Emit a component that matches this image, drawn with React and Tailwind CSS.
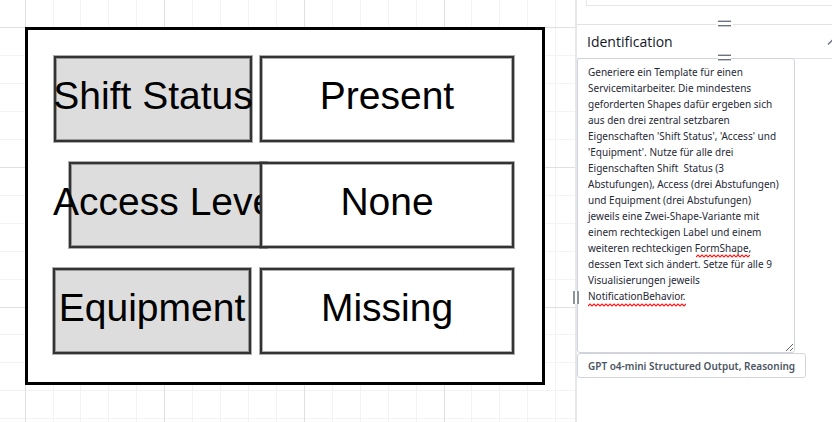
import React from "react";

const shapes = [
  { text: "Shift Status", className: "left-[54px] top-[56px] w-[198px] bg-[#dddddd]" },
  { text: "Present", className: "left-[260px] top-[56px] w-[254px] bg-white" },
  { text: "Access Level", className: "left-[69px] top-[162px] w-[198px] bg-[#dddddd]" },
  { text: "None", className: "left-[260px] top-[162px] w-[254px] bg-white" },
  { text: "Equipment", className: "left-[53px] top-[268px] w-[198px] bg-[#dddddd]" },
  { text: "Missing", className: "left-[260px] top-[268px] w-[254px] bg-white" },
];

const promptText = [
  "Generiere ein Template für einen",
  "Servicemitarbeiter. Die mindestens",
  "geforderten Shapes dafür ergeben sich",
  "aus den drei zentral setzbaren",
  "Eigenschaften 'Shift Status', 'Access' und",
  "'Equipment'. Nutze für alle drei",
  "Eigenschaften Shift  Status (3",
  "Abstufungen), Access (drei Abstufungen)",
  "und Equipment (drei Abstufungen)",
  "jeweils eine Zwei-Shape-Variante mit",
  "einem rechteckigen Label und einem",
  "weiteren rechteckigen FormShape,",
  "dessen Text sich ändert. Setze für alle 9",
  "Visualisierungen jeweils",
  "NotificationBehavior.",
].join("\n");

const CELL = 27.93;

function GridLines() {
  const steps = Array.from({ length: 80 }, (_, i) => i - 1);
  const color = (i) => (i % 5 === 0 ? "#e0e0e0" : "#f3f3f3");
  const ordered = [...steps.filter((i) => i % 5 !== 0), ...steps.filter((i) => i % 5 === 0)];
  return (
    <svg className="absolute inset-0 h-full w-full" aria-hidden="true" shapeRendering="crispEdges">
      {ordered.map((i) => (
        <g key={i} fill={color(i)}>
          <rect x={Math.round(24.6 + i * CELL)} y="0" width="1" height="100%" />
          <rect x="0" y={Math.round(27.2 + i * CELL)} width="100%" height="1" />
        </g>
      ))}
    </svg>
  );
}

function Canvas() {
  return (
    <main className="relative min-w-0 flex-1 overflow-hidden bg-white">
      <GridLines />
      <div className="absolute left-[25px] top-[27px] h-[358px] w-[520px] border-3 border-black bg-white" />
      {shapes.map((s) => (
        <div
          key={s.text}
          className={`absolute flex h-[86px] items-center justify-center border-2 border-[#333333] pb-[6px] font-['Liberation_Sans',Arial,sans-serif] text-[39px] leading-[44px] whitespace-nowrap text-black ring-1 ring-[#333333]/40 inset-ring-1 inset-ring-[#333333]/40 ${s.className}`}
        >
          {s.text}
        </div>
      ))}
    </main>
  );
}

function Divider() {
  return (
    <div className="flex h-px items-center">
      <span className="h-px w-[139px] bg-[#e0e2e7]" />
      <span className="z-10 mb-[2px] h-[5px] w-[17px] shrink-0 px-[2px]">
        <span className="block h-full border-y border-[#6b7280] bg-white shadow-[0_1px_0_#c4c8ce,0_-1px_0_#c4c8ce]" />
      </span>
      <span className="h-px flex-1 bg-[#e0e2e7]" />
    </div>
  );
}

function Squiggle({ className, width }) {
  const count = Math.floor(width / 2);
  const d = "M0 3" + Array.from({ length: count }, (_, i) => `L${i * 2 + 2} ${i % 2 === 0 ? 1 : 3}`).join("");
  return (
    <svg className={`pointer-events-none absolute ${className}`} width={width} height="4" aria-hidden="true">
      <path d={d} fill="none" stroke="#ff1a1a" strokeWidth="1.2" />
    </svg>
  );
}

function SidePanel() {
  return (
    <aside className="relative flex w-[257px] shrink-0 flex-col border-l-2 border-[#e5e7eb] bg-white">
      <span className="absolute top-[291px] -left-[4px] z-10 h-[13px] w-[6px] border-l-2 border-r-2 border-[#8b92a0] bg-white" />
      <div className="mb-[18px] ml-[9px] h-[6px] border-b border-l border-[#e5e7eb]" />
      <Divider />
      <button
        type="button"
        className="flex h-[33px] items-center justify-between overflow-hidden pl-[10px] text-left"
      >
        <span className="text-[14px] leading-[20px] text-[#111827]">Identification</span>
        <svg className="-mr-[8px] shrink-0" width="14" height="14" viewBox="0 0 14 14" aria-hidden="true">
          <path d="M2 9.5 7 4.5 12 9.5" fill="none" stroke="#6b7280" strokeWidth="1.5" />
        </svg>
      </button>
      <Divider />
      <div className="relative -mt-px">
        <textarea
          aria-label="Prompt"
          spellCheck={false}
          defaultValue={promptText}
          className="block h-[295px] w-[218px] resize overflow-hidden rounded-[3px] border border-[#d1d5db] bg-transparent py-[5px] pr-0 pl-[10px] font-['Noto_Sans',sans-serif] text-[10px] leading-[16px] text-[#1f2937] outline-none"
        />
        <Squiggle className="top-[196px] left-[119px]" width={54} />
        <Squiggle className="top-[245px] left-[11px]" width={98} />
      </div>
      <button
        type="button"
        className="h-[25px] self-start rounded-[3px] border border-[#d1d5db] bg-white px-[10px] font-['Noto_Sans',sans-serif] text-[10px] leading-[16px] font-semibold whitespace-nowrap text-[#4b5563]"
      >
        GPT o4-mini Structured Output, Reasoning
      </button>
    </aside>
  );
}

export default function App() {
  return (
    <div className="flex min-h-screen overflow-hidden bg-white font-['Open_Sans','Noto_Sans',sans-serif]">
      <Canvas />
      <SidePanel />
    </div>
  );
}
